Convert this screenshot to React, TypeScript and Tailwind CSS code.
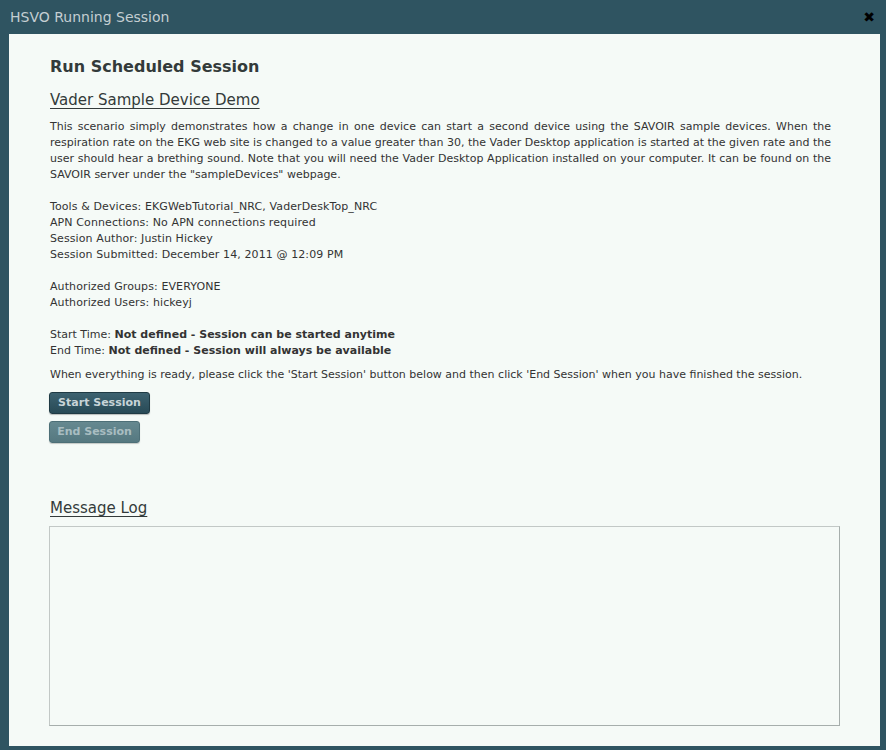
const paragraph = [
  'This scenario simply demonstrates how a change in one device can start a second device using the SAVOIR sample devices. When the',
  'respiration rate on the EKG web site is changed to a value greater than 30, the Vader Desktop application is started at the given rate and the',
  'user should hear a brething sound. Note that you will need the Vader Desktop Application installed on your computer. It can be found on the',
  'SAVOIR server under the "sampleDevices" webpage.',
];

const details = [
  'Tools & Devices: EKGWebTutorial_NRC, VaderDeskTop_NRC',
  'APN Connections: No APN connections required',
  'Session Author: Justin Hickey',
  'Session Submitted: December 14, 2011 @ 12:09 PM',
];

export default function App() {
  return (
    <div
      className="w-[886px] h-[750px] bg-[#2f5461] flex flex-col text-[#333] overflow-hidden"
      style={{ fontFamily: '"DejaVu Sans", Verdana, sans-serif' }}
    >
      <div className="h-[34px] flex items-center justify-between pl-[10px] pr-[11px] shrink-0">
        <span className="text-[14px] text-[#c4ced2]">HSVO Running Session</span>
        <span className="text-[14px] font-bold text-black leading-none">✖</span>
      </div>

      <div className="ml-[9px] mr-[6px] h-[712px] bg-[#f5faf7] pt-[21px] pl-[41px] pr-[40px]">
        <h1 className="text-[16px] font-bold leading-[24px] text-[#333a3a]">Run Scheduled Session</h1>
        <h2 className="mt-[11px] text-[15px] leading-[20px] underline underline-offset-[3px] text-[#333a3a]">
          Vader Sample Device Demo
        </h2>

        <div className="mt-[9px] text-[11px] leading-[16px] w-[781px]">
          {paragraph.map((line, i) => (
            <div
              key={i}
              className={i < paragraph.length - 1 ? 'text-justify [text-align-last:justify] whitespace-nowrap' : ''}
            >
              {line}
            </div>
          ))}
        </div>

        <div className="mt-[16px] text-[11px] leading-[16px] tracking-[0.1px]">
          {details.map(line => (
            <div key={line}>{line}</div>
          ))}
        </div>

        <div className="mt-[16px] text-[11px] leading-[16px] tracking-[0.1px]">
          <div>Authorized Groups: EVERYONE</div>
          <div>Authorized Users: hickeyj</div>
        </div>

        <div className="mt-[16px] text-[11px] leading-[16px]">
          <div>
            Start Time: <span className="font-bold">Not defined - Session can be started anytime</span>
          </div>
          <div>
            End Time: <span className="font-bold">Not defined - Session will always be available</span>
          </div>
        </div>

        <p className="mt-[8px] text-[11px] leading-[16px]">
          When everything is ready, please click the 'Start Session' button below and then click 'End Session' when you have finished the session.
        </p>

        <div className="mt-[9px] ml-[-1px] flex flex-col items-start gap-[7px]">
          <button className="h-[22px] w-[101px] rounded-[3px] border border-[#1f3a44] bg-gradient-to-b from-[#3d6270] to-[#284a56] text-[11px] font-bold text-[#c8d4d8] shadow-[0_1px_1px_rgba(0,0,0,0.25)]">
            Start Session
          </button>
          <button className="h-[22px] w-[91px] rounded-[3px] border border-[#4d6f77] bg-gradient-to-b from-[#668990] to-[#557880] text-[11px] font-bold text-[#a9bdc1] shadow-[0_1px_1px_rgba(0,0,0,0.2)]">
            End Session
          </button>
        </div>

        <h2 className="mt-[55px] text-[15px] leading-[20px] underline underline-offset-[3px] text-[#333a3a]">
          Message Log
        </h2>
        <div className="mt-[8px] ml-[-1px] h-[200px] w-[791px] border border-[#c2c8c6] border-b-[#a6aeac] border-r-[#a6aeac] bg-[#f5faf7]" />
      </div>
    </div>
  );
}
